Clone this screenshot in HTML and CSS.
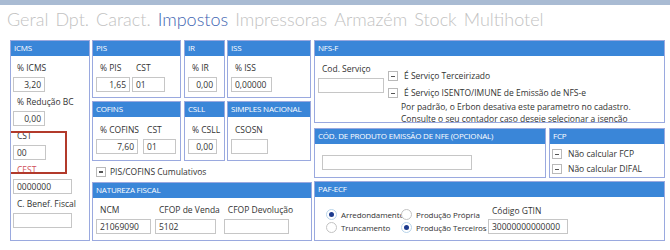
FILE: index.html
```html
<!DOCTYPE html>
<html lang="pt">
<head>
<meta charset="utf-8">
<title>Impostos</title>
<link rel="stylesheet" href="styles.css">
</head>
<body>
<div class="topbar"></div>
<nav class="tabs">
  <span class="tab">Geral</span>
  <span class="tab">Dpt.</span>
  <span class="tab">Caract.</span>
  <span class="tab active">Impostos</span>
  <span class="tab">Impressoras</span>
  <span class="tab">Armazém</span>
  <span class="tab">Stock</span>
  <span class="tab">Multihotel</span>
</nav>
<main class="content">
  <section class="panel icms">
    <h2 class="ph">ICMS</h2>
    <div class="pb stack">
      <div class="field"><label class="lbl">% ICMS</label><div class="inp num w32">3,20</div></div>
      <div class="field"><label class="lbl">% Redução BC</label><div class="inp num w32">0,00</div></div>
      <div class="field hl"><label class="lbl">CST</label><div class="inp w33">00</div></div>
      <div class="field"><label class="lbl red">CEST</label><div class="inp w59">0000000</div></div>
      <div class="field"><label class="lbl">C. Benef. Fiscal</label><div class="inp w59"></div></div>
    </div>
  </section>

  <div class="mid">
    <div class="grid6">
      <section class="panel">
        <h2 class="ph">PIS</h2>
        <div class="pb row r1">
          <div class="field"><label class="lbl">% PIS</label><div class="inp num w34">1,65</div></div>
          <div class="field"><label class="lbl">CST</label><div class="inp w33">01</div></div>
        </div>
      </section>
      <section class="panel">
        <h2 class="ph">IR</h2>
        <div class="pb row r1">
          <div class="field"><label class="lbl">% IR</label><div class="inp num w29">0,00</div></div>
        </div>
      </section>
      <section class="panel">
        <h2 class="ph">ISS</h2>
        <div class="pb row r1">
          <div class="field"><label class="lbl">% ISS</label><div class="inp w41">0,00000</div></div>
        </div>
      </section>
      <section class="panel">
        <h2 class="ph">COFINS</h2>
        <div class="pb row r2 g4">
          <div class="field"><label class="lbl">% COFINS</label><div class="inp num w42">7,60</div></div>
          <div class="field"><label class="lbl">CST</label><div class="inp w33">01</div></div>
        </div>
      </section>
      <section class="panel">
        <h2 class="ph">CSLL</h2>
        <div class="pb row r2">
          <div class="field"><label class="lbl">% CSLL</label><div class="inp num w29">0,00</div></div>
        </div>
      </section>
      <section class="panel">
        <h2 class="ph">SIMPLES NACIONAL</h2>
        <div class="pb row r2">
          <div class="field"><label class="lbl">CSOSN</label><div class="inp w37"></div></div>
        </div>
      </section>
    </div>
    <div class="check cumul"><span class="cb"></span><span>PIS/COFINS Cumulativos</span></div>
    <section class="panel natureza">
      <h2 class="ph">NATUREZA FISCAL</h2>
      <div class="pb row r1 g4">
        <div class="field"><label class="lbl">NCM</label><div class="inp w55">21069090</div></div>
        <div class="field"><label class="lbl">CFOP de Venda</label><div class="inp w61">5102</div></div>
        <div class="field"><label class="lbl">CFOP Devolução</label><div class="inp w65"></div></div>
      </div>
    </section>
  </div>

  <div class="right">
    <section class="panel nfs">
      <h2 class="ph">NFS-F</h2>
      <div class="pb nfs-body">
        <div class="field"><label class="lbl">Cod. Serviço</label><div class="inp w66"></div></div>
        <div class="nfs-opts">
          <div class="check"><span class="cb"></span><span>É Serviço Terceirizado</span></div>
          <div class="check second"><span class="cb"></span><span>É Serviço ISENTO/IMUNE de Emissão de NFS-e</span></div>
          <p class="note">Por padrão, o Erbon desativa este parametro no cadastro.</p>
          <p class="note">Consulte o seu contador caso deseje selecionar a isenção</p>
        </div>
      </div>
    </section>
    <div class="mid-row">
      <section class="panel cod">
        <h2 class="ph">CÓD. DE PRODUTO EMISSÃO DE NFE (OPCIONAL)</h2>
        <div class="pb cod-body"><div class="inp w150"></div></div>
      </section>
      <section class="panel fcp">
        <h2 class="ph">FCP</h2>
        <div class="pb fcp-body">
          <div class="check"><span class="cb"></span><span>Não calcular FCP</span></div>
          <div class="check"><span class="cb"></span><span>Não calcular DIFAL</span></div>
        </div>
      </section>
    </div>
    <section class="panel paf">
      <h2 class="ph">PAF-ECF</h2>
      <div class="pb paf-body">
        <div class="radios">
          <div class="radio-item"><span class="rd on"></span><span>Arredondamento</span></div>
          <div class="radio-item"><span class="rd"></span><span>Produção Própria</span></div>
          <div class="radio-item"><span class="rd"></span><span>Truncamento</span></div>
          <div class="radio-item"><span class="rd on"></span><span>Produção Terceiros</span></div>
        </div>
        <div class="field gtin"><label class="lbl">Código GTIN</label><div class="inp w80">30000000000000</div></div>
      </div>
    </section>
  </div>
</main>
</body>
</html>
```

FILE: styles.css
```css
* { box-sizing: border-box; }
html, body { margin: 0; padding: 0; background: #ffffff; }
body {
  width: 670px;
  height: 250px;
  overflow: hidden;
  font-family: "Open Sans", "Noto Sans", sans-serif;
  color: #333;
}
.topbar { height: 5px; background: #a9bbd3; }
.tabs {
  height: 35px;
  padding: 1px 0 0 7px;
  display: flex;
  gap: 7px;
  font-family: Lato, "Open Sans", sans-serif;
  font-weight: 300;
  font-size: 18px;
  line-height: 26px;
  color: #c2c2c2;
  white-space: nowrap;
}
.tab.active { color: #3f66b2; }

.content {
  display: flex;
  padding-left: 10px;
  gap: 2px;
  align-items: flex-start;
}
.panel {
  border: 1px solid #9aa9df;
  background: #fff;
  overflow: hidden;
  display: flex;
  flex-direction: column;
}
.ph {
  margin: -1px -1px 0;
  height: 16px;
  line-height: 16px;
  padding-left: 4px;
  background: #3a86d8;
  color: #fff;
  font-size: 8px;
  font-weight: 400;
  letter-spacing: -0.2px;
  white-space: nowrap;
  text-transform: uppercase;
}
.lbl {
  display: block;
  font-size: 8.5px;
  line-height: 12px;
  height: 12px;
  padding-left: 4px;
  margin-bottom: 3px;
  white-space: nowrap;
  color: #333;
}
.lbl.red { color: #d0505a; }
.inp {
  height: 15px;
  border: 1px solid #c6c6c6;
  background: #fff;
  font-size: 8.5px;
  line-height: 13px;
  padding: 0 3px;
  color: #333;
  white-space: nowrap;
  overflow: hidden;
}
.inp.num { text-align: right; }
.w29 { width: 29px; } .w32 { width: 32px; } .w33 { width: 33px; } .w34 { width: 34px; }
.w37 { width: 37px; } .w41 { width: 41px; } .w42 { width: 42px; } .w55 { width: 55px; }
.w59 { width: 59px; } .w61 { width: 61px; } .w65 { width: 65px; } .w66 { width: 66px; }
.w80 { width: 80px; } .w150 { width: 150px; }

/* ICMS */
.icms { width: 80px; height: 201px; }
.stack { display: flex; flex-direction: column; gap: 4px; padding: 6px 0 0 2px; }
.field.hl { position: relative; }
.field.hl::after {
  content: "";
  position: absolute;
  left: -7px;
  top: 1px;
  width: 57px;
  height: 39px;
  border: 2px solid #b23a2b;
}

/* middle */
.mid { width: 220px; display: flex; flex-direction: column; }
.grid6 {
  display: grid;
  grid-template-columns: 89px 42px 84px;
  grid-template-rows: 58px 60px;
  column-gap: 2px;
  row-gap: 3px;
}
.grid6 .panel:nth-child(2), .grid6 .panel:nth-child(5) { margin-left: 1px; width: 41px; }
.row { display: flex; gap: 2px; padding: 6px 3px 0; }
.row.r2 { padding-top: 7px; }
.row.g4 { gap: 4px; }
.check {
  display: flex;
  align-items: center;
  gap: 6px;
  font-size: 8.5px;
  line-height: 12px;
  height: 12px;
  white-space: nowrap;
}
.cb {
  flex: none;
  width: 10px;
  height: 10px;
  border: 1px solid #b9b9b9;
  background: #fff;
  position: relative;
}
.cb::before {
  content: "";
  position: absolute;
  left: 2px;
  top: 3.5px;
  width: 4px;
  height: 1.5px;
  background: #555;
}
.cumul { height: 21px; padding-left: 4px; gap: 4px; }
.natureza { height: 59px; }

/* right */
.right { width: 351px; display: flex; flex-direction: column; }
.nfs { height: 83px; }
.nfs-body { display: flex; padding: 7px 0 0 3px; gap: 4px; }
.nfs-opts { padding-top: 7px; }
.nfs-opts .second { margin-top: 5px; }
.note {
  margin: 0;
  padding-left: 13px;
  font-size: 8.5px;
  line-height: 12px;
  white-space: nowrap;
}
.nfs-opts .second + .note { margin-top: 2px; }
.mid-row { display: flex; gap: 3px; margin-top: 5px; }
.cod { width: 232px; height: 50px; }
.cod-body { padding: 11px 0 0 7px; }
.fcp { width: 116px; height: 50px; }
.fcp-body { padding: 4px 0 0 2px; display: flex; flex-direction: column; gap: 3px; }
.paf { height: 60px; margin-top: 3px; }
.paf-body { display: flex; padding: 8px 0 0 11px; }
.radios {
  display: grid;
  grid-template-columns: 75px 87px;
  grid-auto-rows: 13px;
  margin-top: 3px;
}
.radio-item {
  display: flex;
  align-items: center;
  gap: 4px;
  font-size: 8px;
  letter-spacing: -0.1px;
  white-space: nowrap;
}
.rd {
  flex: none;
  width: 11px;
  height: 11px;
  border-radius: 50%;
  border: 1px solid #c3c3c3;
  background: #fff;
  position: relative;
}
.rd.on { border-color: #b8d4ea; }
.rd.on::after {
  content: "";
  position: absolute;
  left: 2px;
  top: 2px;
  width: 5px;
  height: 5px;
  border-radius: 50%;
  background: #1c3a8e;
}
.gtin .lbl { margin-bottom: 2px; }
```
